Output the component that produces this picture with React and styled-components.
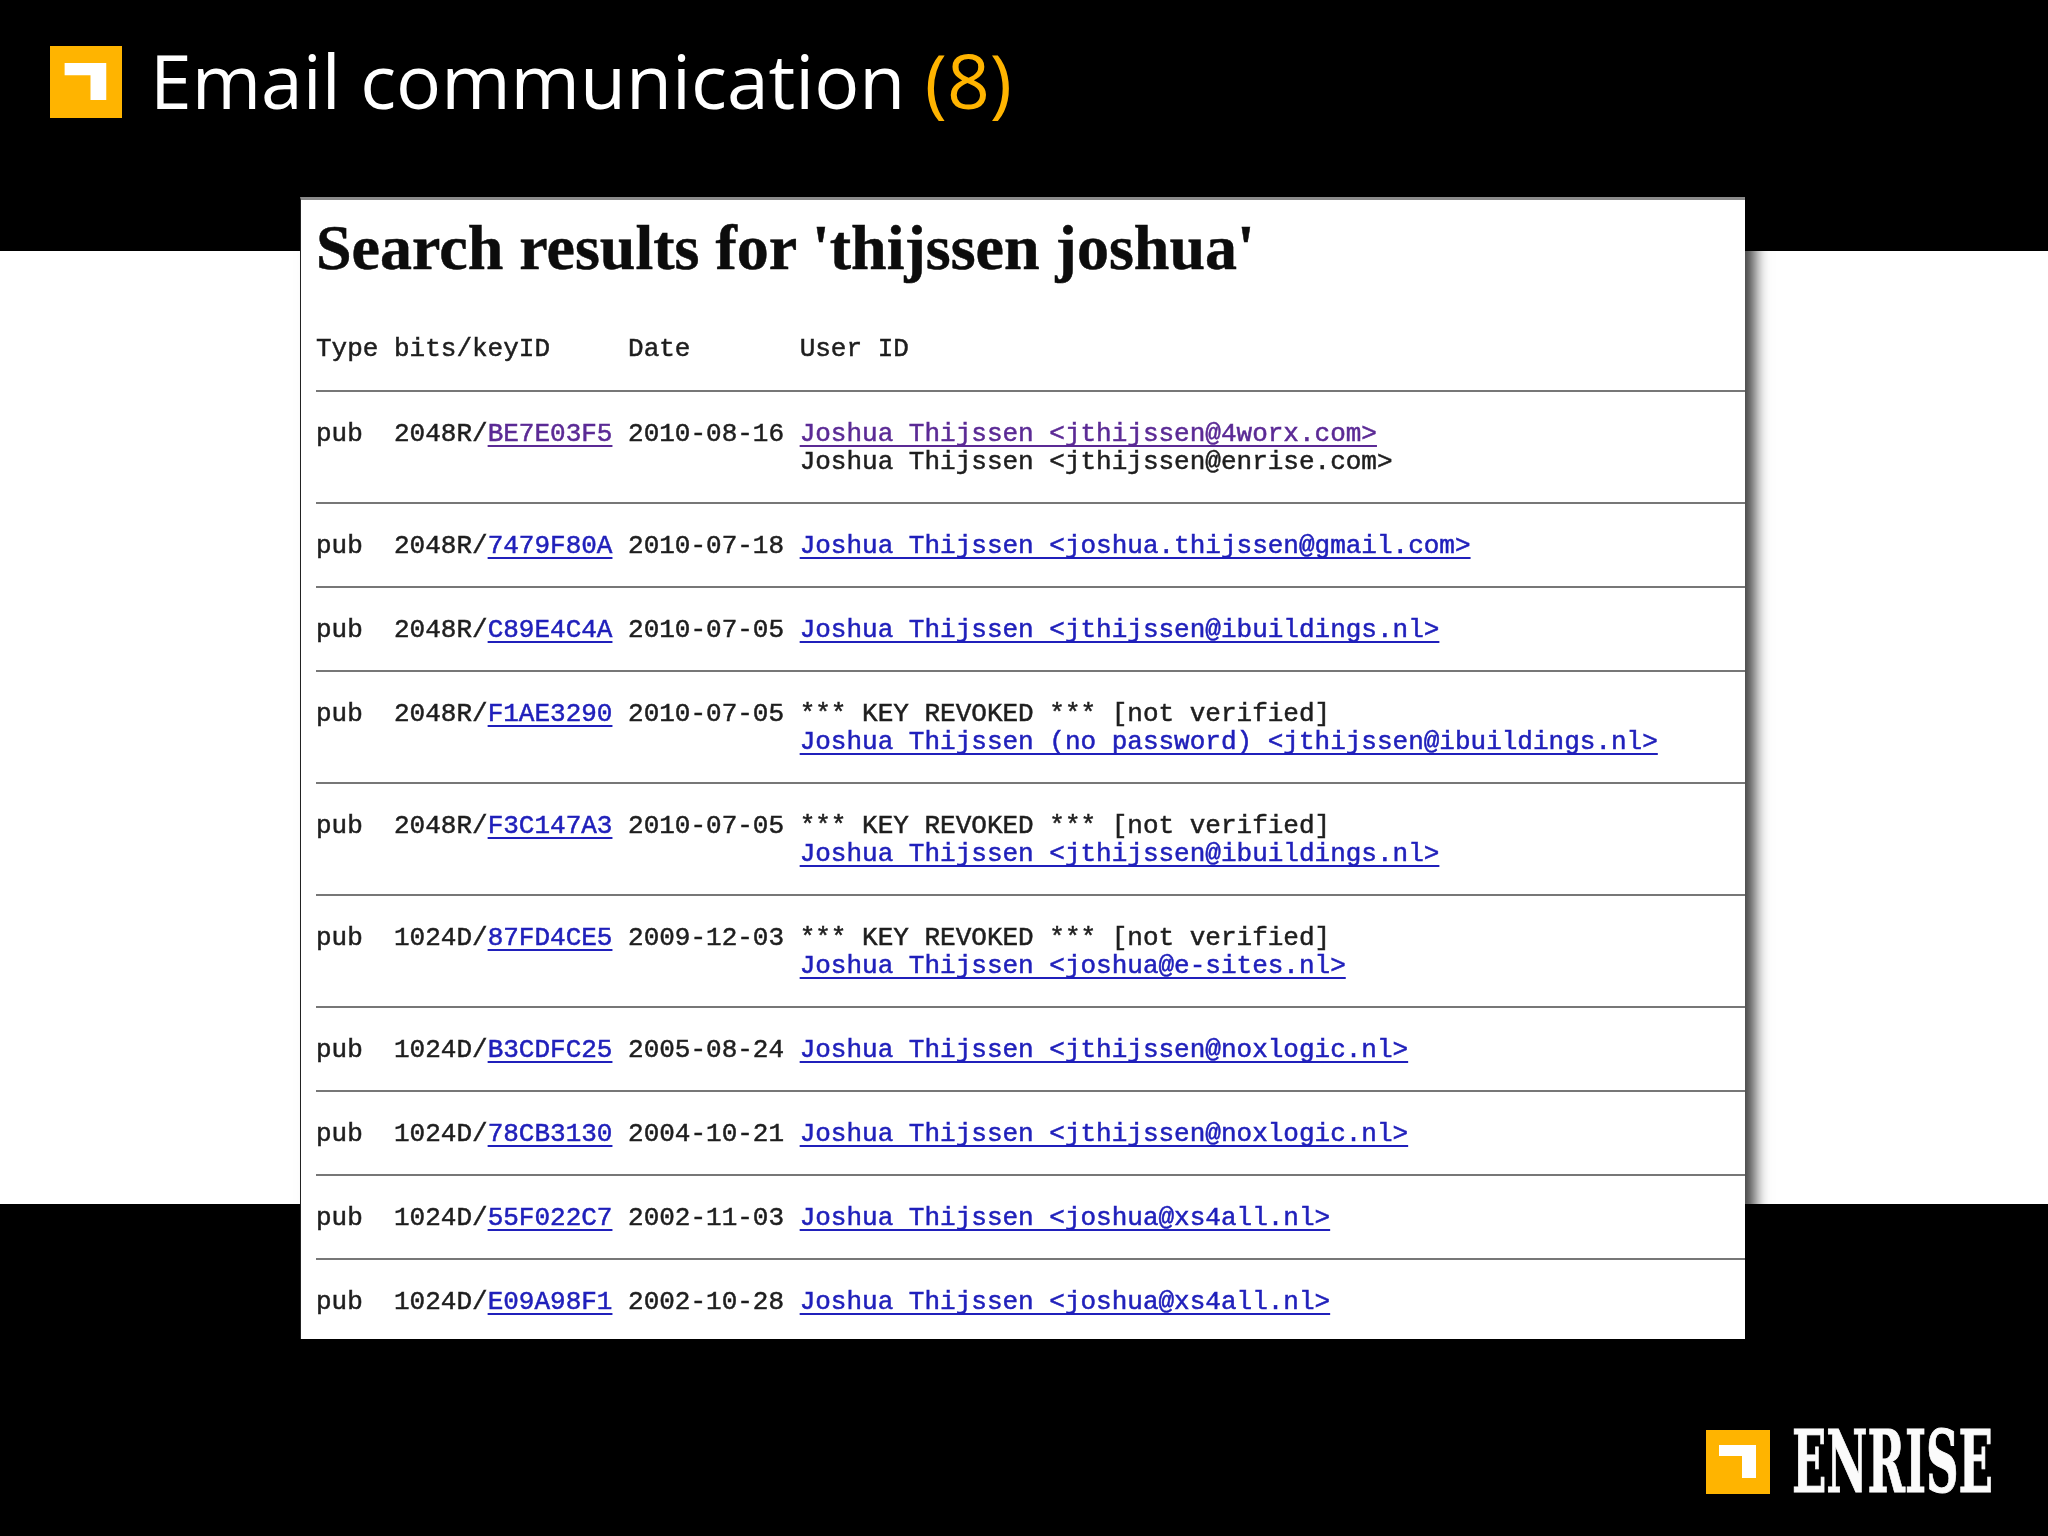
import React from "react";
import styled, { createGlobalStyle } from "styled-components";

const GlobalStyle = createGlobalStyle`
  html, body {
    margin: 0;
    padding: 0;
    background: #000;
  }
`;

const keys = [
  { kind: "pub", bits: "2048R/", id: "BE7E03F5", date: "2010-08-16", visited: true,
    lines: [{ text: "Joshua Thijssen <jthijssen@4worx.com>", link: true }, { text: "Joshua Thijssen <jthijssen@enrise.com>" }] },
  { kind: "pub", bits: "2048R/", id: "7479F80A", date: "2010-07-18",
    lines: [{ text: "Joshua Thijssen <joshua.thijssen@gmail.com>", link: true }] },
  { kind: "pub", bits: "2048R/", id: "C89E4C4A", date: "2010-07-05",
    lines: [{ text: "Joshua Thijssen <jthijssen@ibuildings.nl>", link: true }] },
  { kind: "pub", bits: "2048R/", id: "F1AE3290", date: "2010-07-05",
    lines: [{ text: "*** KEY REVOKED *** [not verified]" }, { text: "Joshua Thijssen (no password) <jthijssen@ibuildings.nl>", link: true }] },
  { kind: "pub", bits: "2048R/", id: "F3C147A3", date: "2010-07-05",
    lines: [{ text: "*** KEY REVOKED *** [not verified]" }, { text: "Joshua Thijssen <jthijssen@ibuildings.nl>", link: true }] },
  { kind: "pub", bits: "1024D/", id: "87FD4CE5", date: "2009-12-03",
    lines: [{ text: "*** KEY REVOKED *** [not verified]" }, { text: "Joshua Thijssen <joshua@e-sites.nl>", link: true }] },
  { kind: "pub", bits: "1024D/", id: "B3CDFC25", date: "2005-08-24",
    lines: [{ text: "Joshua Thijssen <jthijssen@noxlogic.nl>", link: true }] },
  { kind: "pub", bits: "1024D/", id: "78CB3130", date: "2004-10-21",
    lines: [{ text: "Joshua Thijssen <jthijssen@noxlogic.nl>", link: true }] },
  { kind: "pub", bits: "1024D/", id: "55F022C7", date: "2002-11-03",
    lines: [{ text: "Joshua Thijssen <joshua@xs4all.nl>", link: true }] },
  { kind: "pub", bits: "1024D/", id: "E09A98F1", date: "2002-10-28",
    lines: [{ text: "Joshua Thijssen <joshua@xs4all.nl>", link: true }] },
];

function Mark({ size }) {
  return (
    <svg width={size} height={size} viewBox="0 0 64 64" aria-hidden="true">
      <rect width="64" height="64" fill="#ffb400" />
      <path d="M13 15H50V48H36V26H13Z" fill="#fff" />
    </svg>
  );
}

export default function App() {
  return (
    <>
      <GlobalStyle />
      <Slide>
        <Header>
          <Mark size={72} />
          <Heading>
            Email communication <Count>(8)</Count>
          </Heading>
        </Header>

        <Panel>
          <PanelTitle>Search results for 'thijssen joshua'</PanelTitle>
          <Columns>
            <span>Type</span>
            <span>bits/keyID</span>
            <span>Date</span>
            <span>User ID</span>
          </Columns>
          {keys.map((key) => (
            <KeyRow key={key.id}>
              <span>{key.kind}</span>
              <span>
                {key.bits}
                <KeyLink $visited={key.visited}>{key.id}</KeyLink>
              </span>
              <span>{key.date}</span>
              <UserIds>
                {key.lines.map((line) =>
                  line.link ? (
                    <div key={line.text}>
                      <KeyLink $visited={key.visited}>{line.text}</KeyLink>
                    </div>
                  ) : (
                    <div key={line.text}>{line.text}</div>
                  )
                )}
              </UserIds>
            </KeyRow>
          ))}
        </Panel>

        <Footer>
          <Mark size={64} />
          <Brand>
            <BrandText>ENRISE</BrandText>
          </Brand>
        </Footer>
      </Slide>
    </>
  );
}

const Slide = styled.div`
  width: 2048px;
  height: 1536px;
  overflow: hidden;
  display: flex;
  flex-direction: column;
  background: linear-gradient(
    to bottom,
    #000 0,
    #000 251px,
    #fff 251px,
    #fff 1204px,
    #000 1204px
  );
`;

const Header = styled.header`
  height: 197px;
  box-sizing: border-box;
  padding: 46px 0 0 50px;
  display: flex;
  align-items: flex-start;
  gap: 28px;
`;

const Heading = styled.h1`
  margin: 0;
  height: 72px;
  line-height: 69px;
  font-family: "Open Sans", sans-serif;
  font-weight: 400;
  font-size: 75px;
  color: #fff;
  white-space: pre;
`;

const Count = styled.span`
  color: #ffb400;
`;

const Panel = styled.main`
  margin-left: 300px;
  width: 1445px;
  height: 1142px;
  box-sizing: border-box;
  background: #fff;
  border-top: 3px solid #8a8a8a;
  border-left: 1px solid #222;
  box-shadow: 12px 0 14px -2px rgba(0, 0, 0, 0.75);
  overflow: hidden;
`;

const PanelTitle = styled.h2`
  margin: 0;
  padding: 12px 0 0 15px;
  height: 92px;
  box-sizing: border-box;
  line-height: 72px;
  font-family: "Liberation Serif", "Times New Roman", serif;
  font-weight: 700;
  font-size: 64px;
  color: #0c0c0c;
  white-space: pre;
  -webkit-text-stroke: 0.5px #0c0c0c;
  filter: blur(0.6px);
`;

const Grid = styled.div`
  display: grid;
  grid-template-columns: 5ch 15ch 11ch 1fr;
  margin-left: 15px;
  font-family: "Liberation Mono", "Courier New", monospace;
  font-size: 26px;
  line-height: 28px;
  color: #1e1e1e;
  white-space: pre;
  -webkit-text-stroke: 0.5px #1e1e1e;
`;

const Columns = styled(Grid)`
  padding-top: 43px;
  height: 98px;
  box-sizing: border-box;
  filter: blur(0.4px);
`;

const KeyRow = styled(Grid)`
  border-top: 2px solid #777;
  padding-top: 28px;
  padding-bottom: 26px;
  filter: blur(0.4px);
`;

const UserIds = styled.div`
  display: flex;
  flex-direction: column;
`;

const KeyLink = styled.span`
  color: ${(p) => (p.$visited ? "#5b2a95" : "#2020bb")};
  -webkit-text-stroke-color: ${(p) => (p.$visited ? "#5b2a95" : "#2020bb")};
  text-decoration: underline;
  text-underline-offset: 4px;
  text-decoration-thickness: 2px;
  text-decoration-skip-ink: none;
`;

const Footer = styled.footer`
  margin-top: 91px;
  padding-right: 56px;
  display: flex;
  justify-content: flex-end;
  align-items: flex-start;
  gap: 22px;
`;

const Brand = styled.div`
  width: 200px;
  height: 64px;
`;

const BrandText = styled.div`
  font-family: "DejaVu Serif", serif;
  font-weight: 700;
  font-size: 86px;
  line-height: 64px;
  color: #fbfbfb;
  white-space: pre;
  -webkit-text-stroke: 1px #fbfbfb;
  transform-origin: left center;
  transform: scaleX(0.524);
`;
